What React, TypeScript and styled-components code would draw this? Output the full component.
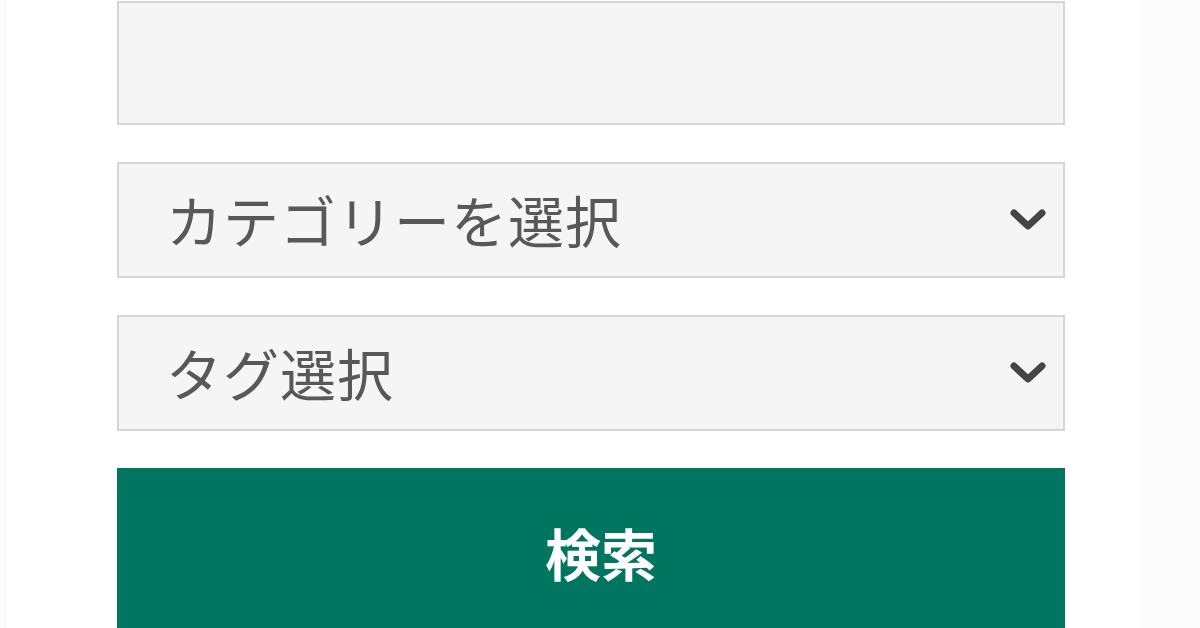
import React from "react";
import styled, { createGlobalStyle } from "styled-components";

const Global = createGlobalStyle`
  html, body {
    margin: 0;
    padding: 0;
    background: #fcfcfc;
    width: 1200px;
    height: 628px;
    overflow: hidden;
  }
  * { box-sizing: border-box; }
`;

const Page = styled.div`
  margin-left: 4px;
  width: 1135px;
  height: 628px;
  background: #ffffff;
  border-left: 1px solid #f4f4f4;
  padding: 1px 0 0 112px;
  overflow: hidden;
`;

const Form = styled.form`
  width: 948px;
  display: flex;
  flex-direction: column;
  gap: 37px;
  font-family: "Noto Sans CJK JP", "Noto Sans", sans-serif;
`;

const TextBox = styled.div`
  height: 124px;
  background: #f5f5f5;
  border: 2px solid #d6d6d6;
`;

const SelectBox = styled.div`
  height: 116px;
  background: #f5f5f5;
  border: 2px solid #d6d6d6;
  display: flex;
  align-items: center;
  justify-content: space-between;
  padding: 0 17px 0 47px;
`;

const SelectLabel = styled.span`
  font-size: 56px;
  line-height: 1;
  color: #585858;
  letter-spacing: 1px;
  margin-top: -3px;
`;

const Chevron = styled.svg`
  width: 36px;
  height: 24px;
  flex-shrink: 0;
`;

const SearchButton = styled.button`
  height: 170px;
  width: 948px;
  background: #00755f;
  border: none;
  color: #ffffff;
  font-family: "Noto Sans CJK JP", "Noto Sans", sans-serif;
  font-weight: 700;
  font-size: 56px;
  display: flex;
  align-items: flex-start;
  justify-content: center;
  padding: 56px 0 0 20px;
  line-height: 1;
`;

const ChevronIcon = () => (
  <Chevron viewBox="0 0 36 24">
    <polyline
      points="4,5 18,18 32,5"
      fill="none"
      stroke="#454545"
      strokeWidth="7"
      strokeLinecap="round"
      strokeLinejoin="round"
    />
  </Chevron>
);

export default function App() {
  return (
    <>
      <Global />
      <Page>
        <Form onSubmit={(e) => e.preventDefault()}>
          <TextBox />
          <SelectBox>
            <SelectLabel>カテゴリーを選択</SelectLabel>
            <ChevronIcon />
          </SelectBox>
          <SelectBox>
            <SelectLabel>タグ選択</SelectLabel>
            <ChevronIcon />
          </SelectBox>
          <SearchButton type="submit">検索</SearchButton>
        </Form>
      </Page>
    </>
  );
}
